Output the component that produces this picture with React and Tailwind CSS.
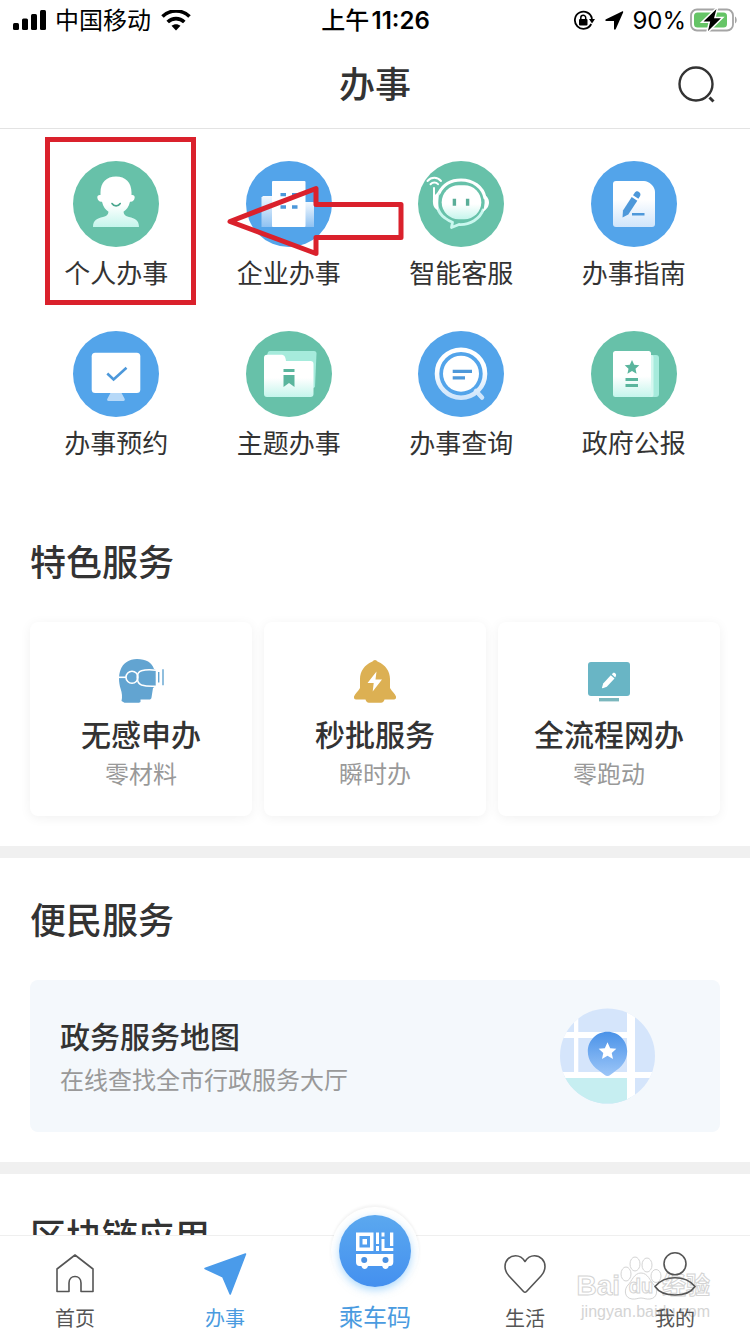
import React, { useState } from "react";

const STAR = "M0 -10 L2.9 -3.6 L9.6 -3.1 L4.6 1.5 L6 8.1 L0 4.7 L-6 8.1 L-4.6 1.5 L-9.6 -3.1 L-2.9 -3.6 Z";

// Shared gradients for the round service icons
function IconDefs() {
  return (
    <svg width="0" height="0" className="absolute" aria-hidden="true">
      <defs>
        <linearGradient id="mint" x1="0" y1="0" x2="0" y2="1">
          <stop offset="0.55" stopColor="#ffffff" />
          <stop offset="1" stopColor="#c5f5ec" />
        </linearGradient>
        <linearGradient id="sky" x1="0" y1="0" x2="0" y2="1">
          <stop offset="0.4" stopColor="#ffffff" />
          <stop offset="1" stopColor="#cfe5fb" />
        </linearGradient>
        <linearGradient id="wing" x1="0" y1="0" x2="0" y2="1">
          <stop offset="0" stopColor="#f2f8fe" />
          <stop offset="1" stopColor="#8fc2f2" />
        </linearGradient>
        <linearGradient id="pin" x1="0" y1="0" x2="0" y2="1">
          <stop offset="0" stopColor="#4a92e8" />
          <stop offset="1" stopColor="#9cc6f8" />
        </linearGradient>
      </defs>
    </svg>
  );
}

function Disc({ color, children }) {
  return (
    <svg viewBox="0 0 86 86" className="w-[86px] h-[86px]" aria-hidden="true">
      <circle cx="43" cy="43" r="43" fill={color} />
      {children}
    </svg>
  );
}

const GREEN = "#67c1a9";
const BLUE = "#53a4ea";

const PersonIcon = () => (
  <Disc color={GREEN}>
    <path
      fill="url(#mint)"
      d="M43 15.500c9.500 0 15.500 6 15.500 16v2.500c2-.500 3.300.800 3.200 2.500-.200 2.800-2.200 4.600-4.700 4.200-1.200 5-3.500 8-6.500 10 .300 3 2 4.600 5.500 5.300C62 57.200 66 59.500 66 66H20c0-6.500 4-8.800 10-10 3.500-.700 5.200-2.300 5.500-5.300-3-2-5.300-5-6.500-10-2.500.400-4.500-1.400-4.700-4.200-.100-1.700 1.200-3 3.200-2.500v-2.500c0-10 6-16 15.500-16z"
    />
    <path d="M39 42.500c2 3.200 6.200 3.200 8.200 0" fill="none" stroke="#4aa78f" strokeWidth="1.600" strokeLinecap="round" />
  </Disc>
);

const CompanyIcon = () => (
  <Disc color={BLUE}>
    <path d="M17 35h10v31H15.500V36.500z" fill="url(#wing)" />
    <path d="M59 41h8a1 1 0 0 1 1 1v24h-9z" fill="url(#wing)" />
    <rect x="26" y="20" width="33.500" height="46" rx="1" fill="#fff" />
    <path d="M34.500 32h5.500v3.300h-5.500zM46 32h5.500v3.300H46zM34.500 44.300h5.500v3.400h-5.500zM46 44.300h5.500v3.400H46z" fill="#4d98da" />
  </Disc>
);

const RobotIcon = () => (
  <Disc color={GREEN}>
    <g fill="none" stroke="#fff" strokeLinecap="round">
      <path d="M9.500 20c3.800-4.200 10-4.200 13.500 0" strokeWidth="2" />
      <path d="M12.500 23.200c2.200-2.400 5.600-2.400 7.500 0" strokeWidth="2" />
      <path d="M16 27v14" strokeWidth="2" />
      <path d="M21 32C26 22 35 19 43 19c12 0 22 7 24 18" strokeWidth="3.200" />
    </g>
    <path
      d="M20.500 32c-3.500 9-2 19 6.500 25 2.500 2 5.500 3.500 7.500 4.200L33.500 66.500 41 63.500C52 64 62 58 65.500 48"
      fill="none"
      stroke="#c9f7ee"
      strokeWidth="2.800"
      strokeLinejoin="round"
    />
    <path d="M20.500 31c-4.500 3-6 6-5.500 11 .300 4 2.500 6.500 5 7z" fill="#fff" />
    <path d="M65.500 33c4 2.500 5.500 5 5.500 8.500s-2 7-6.500 9.500c2.500-6 2.800-12 1-18z" fill="#fff" />
    <rect x="23.700" y="24.300" width="39.600" height="34" rx="17" fill="url(#mint)" />
    <path d="M34.700 37.700h3.400v7h-3.400zM47.900 37.700h3.400v7h-3.400z" fill="#5aae98" />
  </Disc>
);

const GuideIcon = () => (
  <Disc color={BLUE}>
    <path d="M25 20h28c5 0 11 5.500 11 11v32a3 3 0 0 1-3 3H25a3 3 0 0 1-3-3V23a3 3 0 0 1 3-3z" fill="url(#sky)" />
    <g fill="#4d98da">
      <path d="M40.700 36l5.600 3.800-9 13.700-5.800 3 .500-7z" />
      <path d="M42 34.200l1.400-2c1.300-2 3-2.400 4.600-1.300s2 2.800.800 4.700l-1.400 2.200z" />
      <path d="M41 52h12.500v2.500H41z" />
    </g>
  </Disc>
);

const BookingIcon = () => (
  <Disc color={BLUE}>
    <path d="M38 61h10l3.500 6.500c.800 1.400 0 2.500-1 2.500h-15c-1.200 0-1.900-1.200-1-2.500z" fill="#b7d9f8" />
    <rect x="18.700" y="21.700" width="48.600" height="40.300" rx="3.500" fill="#fff" />
    <path d="M34.300 42.500l6.300 6 12.900-11.700" fill="none" stroke="#4d98da" strokeWidth="2.600" />
  </Disc>
);

const FolderIcon = () => (
  <Disc color={GREEN}>
    <path d="M24 20h44a2.500 2.500 0 0 1 2.500 2.500L69 56l-3 2-45-30c0-3 0-8 3-8z" fill="#a6ebdc" />
    <path
      d="M21 23.700h14c3.500 0 4.500 2 5 6.300h24.500a3 3 0 0 1 3 3v30a3 3 0 0 1-3 3H21a3 3 0 0 1-3-3V26.700a3 3 0 0 1 3-3z"
      fill="url(#mint)"
    />
    <path d="M37.500 38h11v3h-11zM37.500 44h11v12L43 52l-5.500 4z" fill="#5ab59d" />
  </Disc>
);

const QueryIcon = () => (
  <Disc color={BLUE}>
    <path d="M58 60l6 6.500" stroke="#cfe5fb" strokeWidth="4.500" strokeLinecap="round" />
    <circle cx="43" cy="42.700" r="24" fill="none" stroke="url(#sky)" strokeWidth="4.600" />
    <circle cx="43" cy="42.700" r="18" fill="#fff" />
    <path d="M34.700 38.800H54v3.200H34.700zM34.700 45.200H47v3.400H34.700z" fill="#4d98da" />
  </Disc>
);

const BulletinIcon = () => (
  <Disc color={GREEN}>
    <path d="M58 24h7a3 3 0 0 1 3 3v36a3 3 0 0 1-3 3h-7z" fill="#a6ebdc" />
    <path d="M58 24h2.500a2 2 0 0 1 2 2v38a2 2 0 0 1-2 2H58z" fill="#d3f7ef" />
    <rect x="22" y="20" width="38" height="46" rx="2.500" fill="url(#mint)" />
    <path d={STAR} transform="translate(41 36.500) scale(.76)" fill="#5ab59d" />
    <path d="M34.500 47H47v3H34.500zM34.500 53H47v3H34.500z" fill="#5ab59d" />
  </Disc>
);

const HeadsetIcon = () => (
  <svg viewBox="0 0 48 48" className="w-12 h-12" aria-hidden="true">
    <path
      d="M20 2c9 0 15 3.500 17 10l1.700 1v16L36 31l-1.500 9.500c-.300 1.500-1 2-2.500 2h-8.500V45L22 45.700H7.500L4.500 44c1-4 .500-8-.800-12C1.500 25 1.500 18 3.500 13 6 6 12 2 20 2z"
      fill="#62a4d1"
    />
    <g fill="none" stroke="#fff" strokeWidth="1.600">
      <path d="M2 20.300h7" />
      <circle cx="15" cy="20.300" r="6" />
      <path d="M39 13.200c-5-.600-11-.500-14.500.500-3 1-4.300 3.500-4.300 6.600 0 3.500 1.300 6.500 4.300 7.700 4 1.300 10 1.400 14.500 1.200" />
    </g>
    <path d="M41.700 15v10.500M46 12.300v16" stroke="#62a4d1" strokeWidth="1.400" />
  </svg>
);

const BellIcon = () => (
  <svg viewBox="0 0 48 48" className="w-12 h-12" aria-hidden="true">
    <path
      d="M24 3c1.200 0 1.800 1 3 1.700C34.500 8 39 14 39 22v9c2 3.500 5 5.500 6 8.500.300 1.800-.500 3-2 3H33.500c-.500 2-1.500 3.200-3.500 3.200H18c-2 0-3-1.200-3.500-3.200H5c-1.500 0-2.300-1.200-2-3 1-3 4-5 6-8.500v-9C9 14 13.500 8 21 4.700 22.200 4 22.800 3 24 3z"
      fill="#dcb053"
    />
    <path d="M25.500 14.500l-9 11.500h6.200l-1 8.500 9.300-12h-6.500z" fill="#fff" />
  </svg>
);

const ScreenIcon = () => (
  <svg viewBox="0 0 48 48" className="w-12 h-12" aria-hidden="true">
    <rect x="3" y="5" width="42" height="34" rx="3" fill="#69b5c5" />
    <rect x="14" y="41" width="20" height="3.400" fill="#7bb7bd" />
    <path d="M25.800 18.300l3.700 3.200-7.700 8.200-4 1.600c-.600.100-.900-.200-.800-.800l1.200-4z" fill="#fff" />
    <path d="M26.800 17.200l1-1c1.500-1.200 4.300 1 3 3l-.600 1.200z" fill="#fff" />
  </svg>
);

const MapIcon = () => (
  <svg viewBox="0 0 96 96" className="w-24 h-24" aria-hidden="true">
    <clipPath id="mapClip">
      <circle cx="47.500" cy="48" r="47.500" />
    </clipPath>
    <g clipPath="url(#mapClip)">
      <rect width="96" height="96" fill="#d5e5fb" />
      <rect y="67" width="71" height="30" fill="#c6eef1" />
      <path d="M14 0h4.300v67H14zM67 0h8v96h-8zM0 24h67v6H0zM0 64h96v6H0z" fill="#fff" />
    </g>
    <path d="M47.500 23.700c11 0 19.700 8.800 19.700 19.600 0 10-6 16-13 20.700-3 2-4.500 4-6.700 4s-3.700-2-6.700-4c-7-4.700-13-10.700-13-20.700 0-10.800 8.700-19.600 19.700-19.600z" fill="url(#pin)" />
    <path d={STAR} transform="translate(47.500 43.500) scale(.92)" fill="#fff" />
  </svg>
);

const tabIcon = "w-11 h-11";

const HomeIcon = () => (
  <svg viewBox="0 0 44 44" className={tabIcon} fill="none" stroke="currentColor" strokeWidth="1.600" aria-hidden="true">
    <path d="M22 3L4 17v22.500h12V31c0-4 2.500-6.500 6-6.500s6 2.500 6 6.500v8.500h12V17z" strokeLinejoin="round" />
  </svg>
);

const PlaneIcon = () => (
  <svg viewBox="0 0 44 44" className={tabIcon} aria-hidden="true">
    <path d="M2 16.500L42.500 2 27.200 42 19.800 24.700z" fill="#4a9bea" stroke="#4a9bea" strokeWidth="1.600" strokeLinejoin="round" />
  </svg>
);

const HeartIcon = () => (
  <svg viewBox="0 0 44 44" className={tabIcon} fill="none" stroke="currentColor" strokeWidth="1.600" aria-hidden="true">
    <path d="M22 9.500C19.500 5.500 16 3.800 12.500 3.800 6.500 3.800 2 8.500 2 14.500c0 4 1.500 6.800 4 9.500l14.500 15.500c1 1 2 1 3 0L38 24c2.500-2.700 4-5.500 4-9.500 0-6-4.500-10.700-10.500-10.700-3.500 0-7 1.700-9.500 5.700z" strokeLinejoin="round" />
  </svg>
);

const UserIcon = () => (
  <svg viewBox="0 0 44 44" className={tabIcon} fill="none" stroke="currentColor" strokeWidth="1.600" aria-hidden="true">
    <circle cx="22" cy="11.800" r="11" />
    <path d="M2 34.500C7 28.500 14 25.800 22 25.800s15 2.700 20 8.700C38 40.500 31 43 22 43S6 40.500 2 34.500z" />
  </svg>
);

const BusCodeIcon = () => (
  <svg viewBox="0 0 72 72" className="w-[72px] h-[72px]" aria-hidden="true">
    <g fill="#fff">
      <path fillRule="evenodd" d="M17 17.500h17.500V36H17zM20.500 21v11.500H31V21z" />
      <path d="M23.500 24h4.500v5.500h-4.500z" />
      <path d="M37 17.500h3V29h-3zM37 31h3v5h-3zM42.500 17.500h3v4h-3zM42.500 24h3v9h-3zM51 17.500h3.300V31H51zM47 33h7.300v3H42.500v-3z" />
      <path d="M17 39h37.300v8c0 2.500-1.300 4-3.500 4h-1c-.500 1.800-1.700 3-3.300 3s-2.800-1.200-3.300-3H29c-.500 1.800-1.700 3-3.300 3s-2.800-1.200-3.300-3h-1.900C18.300 51 17 49.500 17 47z" />
    </g>
    <circle cx="25.200" cy="45" r="3" fill="#4a90e2" />
    <circle cx="46.500" cy="45" r="3" fill="#4a90e2" />
  </svg>
);

const services = [
  { name: "个人办事", Icon: PersonIcon },
  { name: "企业办事", Icon: CompanyIcon },
  { name: "智能客服", Icon: RobotIcon },
  { name: "办事指南", Icon: GuideIcon },
  { name: "办事预约", Icon: BookingIcon },
  { name: "主题办事", Icon: FolderIcon },
  { name: "办事查询", Icon: QueryIcon },
  { name: "政府公报", Icon: BulletinIcon },
];

const features = [
  { name: "无感申办", note: "零材料", Icon: HeadsetIcon },
  { name: "秒批服务", note: "瞬时办", Icon: BellIcon },
  { name: "全流程网办", note: "零跑动", Icon: ScreenIcon },
];

const tabs = [
  { name: "首页", Icon: HomeIcon },
  { name: "办事", Icon: PlaneIcon },
  { name: "乘车码", Icon: BusCodeIcon, center: true },
  { name: "生活", Icon: HeartIcon },
  { name: "我的", Icon: UserIcon },
];

function StatusBar() {
  return (
    <div className="h-10 shrink-0 grid grid-cols-[1fr_auto_1fr] items-center pt-0.5 pl-[13px] pr-3 text-2xl leading-9 text-black">
      <div className="flex items-center">
        <svg viewBox="0 0 34 22" className="w-[34px] h-[22px]" aria-hidden="true">
          <rect x="0" y="13" width="6" height="7" rx="1.500" />
          <rect x="9" y="8.500" width="6" height="11.500" rx="1.500" />
          <rect x="18" y="4" width="6" height="16" rx="1.500" />
          <rect x="27" y="0" width="6" height="20" rx="1.500" />
        </svg>
        <span className="ml-2">中国移动</span>
        <svg viewBox="0 0 30 22" className="w-[30px] h-[22px] ml-2.5" aria-hidden="true">
          <path d="M1.500 6.500C9-.800 21-.800 28.500 6.500" fill="none" stroke="#000" strokeWidth="3.600" />
          <path d="M6.700 12c4.700-4.500 11.900-4.500 16.600 0" fill="none" stroke="#000" strokeWidth="3.600" />
          <path d="M15 20.500l-4.500-4.700c2.600-2.200 6.400-2.200 9 0z" />
        </svg>
      </div>
      <div className="font-medium">
        上午 <span className="-ml-1 font-semibold">11:26</span>
      </div>
      <div className="flex items-center justify-end">
        <svg viewBox="0 0 22 22" className="w-[22px] h-[22px]" aria-hidden="true">
          <path d="M18.200 14A8.600 8.600 0 1 1 19 9" fill="none" stroke="#000" strokeWidth="1.800" />
          <path d="M16 9h6l-3 4.500z" />
          <rect x="6" y="9" width="8.500" height="6.500" rx="1" />
          <path d="M7.800 9.500V7.700a2.400 2.400 0 0 1 4.900 0v1.800" fill="none" stroke="#000" strokeWidth="1.500" />
        </svg>
        <svg viewBox="0 0 20 20" className="w-5 h-5 ml-[9px]" aria-hidden="true">
          <path d="M18 .500c.800-.400 1.500.200 1.100 1.100L11.800 18c-.500 1.100-1.800.900-1.800-.300V10H2.300C1.100 10 .900 8.700 2 8.200z" />
        </svg>
        <span className="ml-2">90%</span>
        <svg viewBox="0 0 48 26" className="w-12 h-[26px] ml-1" aria-hidden="true">
          <rect x="1" y="1.500" width="42" height="21" rx="6" fill="none" stroke="#a5a5a5" strokeWidth="1.800" />
          <rect x="4" y="4.500" width="33" height="15" rx="3.500" fill="#65c466" />
          <path d="M45 8.500c2 .800 2.500 5.700 0 7z" fill="#a5a5a5" />
          <path d="M26.500 1L13.500 13.500h6.700L18 23l13-12.800h-7z" stroke="#fff" strokeWidth="3" />
          <path d="M26.500 1L13.500 13.500h6.700L18 23l13-12.800h-7z" />
        </svg>
      </div>
    </div>
  );
}

function Header() {
  return (
    <header className="h-[89px] shrink-0 grid grid-cols-[1fr_auto_1fr] items-center border-b border-[#e3e3e3] pt-0.5 px-[33px]">
      <span />
      <h1 className="text-4xl font-medium">办事</h1>
      <button type="button" aria-label="搜索" className="justify-self-end">
        <svg viewBox="0 0 40 40" className="w-10 h-10" fill="none" stroke="#333" strokeWidth="2.400" aria-hidden="true">
          <circle cx="19" cy="19" r="16.500" />
          <path d="M32.500 32.500l4 4" strokeWidth="3" />
        </svg>
      </button>
    </header>
  );
}

function Section({ title, children }) {
  return (
    <section className="px-[30px] pt-[38px] pb-[30px]">
      <h2 className="text-4xl leading-[50px] font-medium">{title}</h2>
      <div className="mt-[34px]">{children}</div>
    </section>
  );
}

function Watermark() {
  return (
    <div className="absolute right-10 bottom-3 flex flex-col items-end pointer-events-none font-['Liberation_Sans','Noto_Sans_CJK_SC',sans-serif]">
      <div className="flex items-end font-bold leading-8 text-white [-webkit-text-stroke:1px_#d4d4d4]">
        <span className="text-[28px] leading-8">Bai</span>
        <span className="relative w-[42px] h-12 flex items-end justify-center text-xl leading-8">
          <svg viewBox="0 0 42 48" className="absolute inset-0 w-full h-full" fill="#fff" stroke="#d4d4d4" aria-hidden="true">
            <ellipse cx="6" cy="20" rx="5" ry="7" />
            <ellipse cx="15" cy="10" rx="5" ry="7" />
            <ellipse cx="27" cy="11" rx="5" ry="7" />
            <ellipse cx="36" cy="22" rx="5" ry="6.500" />
            <path d="M21 19c7 0 9 8 13 12s4 13-4 14c-4 .500-6-1-9-1s-5 1.500-9 1c-8-1-8-10-4-14s6-12 13-12z" />
          </svg>
          <span className="relative">du</span>
        </span>
        <span className="text-2xl leading-8">经验</span>
      </div>
      <span className="text-base leading-5 text-[#d4d4d4]">jingyan.baidu.com</span>
    </div>
  );
}

function TabBar({ active, onChange }) {
  return (
    <nav className="relative shrink-0 grid grid-cols-5 border-t border-[#efefef] bg-white pb-px">
      <Watermark />
      {tabs.map(({ name, Icon, center }) => (
        <button
          key={name}
          type="button"
          onClick={() => onChange(name)}
          className={`relative flex flex-col items-center gap-[9px] ${center || active === name ? "text-[#4a9be0]" : "text-[#555]"}`}
        >
          {center ? (
            <span className="-mt-[29px] p-2 rounded-full bg-white shadow-[0_-2px_3px_rgba(0,0,0,0.05)]">
              <span className="block rounded-full bg-linear-to-b from-[#5ba8ef] to-[#4490ef] shadow-[0_3px_8px_rgba(90,180,250,0.5)]">
                <Icon />
              </span>
            </span>
          ) : (
            <span className="mt-4">
              <Icon />
            </span>
          )}
          <span className={center ? "text-2xl leading-7" : "text-xl leading-7"}>{name}</span>
        </button>
      ))}
    </nav>
  );
}

function App() {
  const [tab, setTab] = useState("办事");

  return (
    <div className="h-screen flex flex-col bg-white text-[#333] font-['Inter','Noto_Sans_CJK_SC',sans-serif]">
      <IconDefs />
      <StatusBar />
      <Header />

      <main className="flex-1 min-h-0 overflow-y-auto [scrollbar-width:none]">
        <div className="relative px-[30px] pt-8 pb-[38px] grid grid-cols-4 gap-y-[39px]">
          {services.map(({ name, Icon }) => (
            <button key={name} type="button" className="flex flex-col items-center gap-[9px]">
              <Icon />
              <span className="text-[26px] leading-9">{name}</span>
            </button>
          ))}

          {/* Highlight on the first entry */}
          <div className="absolute left-[45px] top-2 w-[151px] h-[168px] border-5 border-[#da212c]" />
          <svg viewBox="0 0 180 74" className="absolute left-[226px] top-[55px] w-[180px] h-[74px]" aria-hidden="true">
            <path
              d="M4 37.500L90 4.500V20.500H175V53.500H90V69.500Z"
              fill="none"
              stroke="#da212c"
              strokeWidth="5"
              strokeLinejoin="round"
            />
          </svg>
        </div>

        <Section title="特色服务">
          <div className="grid grid-cols-3 gap-3">
            {features.map(({ name, note, Icon }) => (
              <button
                key={name}
                type="button"
                className="flex flex-col items-center pt-[35px] pb-[25px] rounded-lg bg-white shadow-[0_2px_12px_rgba(0,0,0,0.06)]"
              >
                <Icon />
                <span className="mt-2.5 text-3xl leading-10 font-medium">{name}</span>
                <span className="mt-1 text-2xl leading-8 text-[#999]">{note}</span>
              </button>
            ))}
          </div>
        </Section>

        <div className="h-3 bg-[#f0f0f0]" />

        <Section title="便民服务">
          <button
            type="button"
            className="w-full flex items-center justify-between rounded-lg bg-[#f4f8fc] py-7 pl-[30px] pr-16 text-left"
          >
            <span className="flex flex-col gap-2 pt-0.5">
              <span className="text-3xl leading-10 font-medium">政务服务地图</span>
              <span className="text-2xl leading-8 text-[#999]">在线查找全市行政服务大厅</span>
            </span>
            <MapIcon />
          </button>
        </Section>

        <div className="h-3 bg-[#f0f0f0]" />

        <Section title="区块链应用" />
      </main>

      <TabBar active={tab} onChange={setTab} />
    </div>
  );
}

export default App;
